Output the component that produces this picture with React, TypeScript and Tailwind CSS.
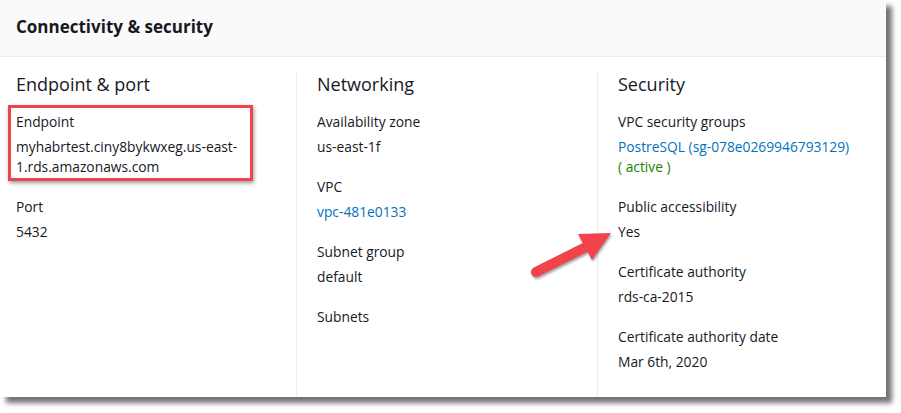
import React from "react"

const font = { fontFamily: '"Open Sans", "Noto Sans", sans-serif' }

type Item = { label: string; value: React.ReactNode }

function Field({ label, value }: Item) {
  return (
    <div className="mb-5">
      <div className="text-[13.8px] leading-5 text-[#16191f]">{label}</div>
      <div className="mt-[5px] text-[13.8px] leading-5 text-[#16191f]">{value}</div>
    </div>
  )
}

function Arrow() {
  return (
    <svg
      className="absolute left-[528px] top-[226px] drop-shadow-[1px_2px_1px_rgba(0,0,0,0.35)]"
      width="90"
      height="56"
      viewBox="0 0 90 56"
    >
      <line x1="8" y1="46" x2="60" y2="20" stroke="#f0434c" strokeWidth="10" strokeLinecap="round" />
      <polygon points="83,7 50,8 64,34" fill="#f0434c" />
    </svg>
  )
}

export default function App() {
  return (
    <div className="w-[901px] h-[413px] bg-white" style={font}>
      <div className="relative w-[886px] h-[397px] overflow-hidden bg-white shadow-[6px_6px_5px_rgba(0,0,0,0.55)]">
        <div className="h-[57px] bg-[#fafafa] border-b border-[#eaeded] px-4 flex items-center">
          <h2 className="text-[17px] font-bold text-[#16191f] leading-6 -mt-[3px]">Connectivity &amp; security</h2>
        </div>

        <div className="grid grid-cols-[296px_301px_1fr] pt-[15px]">
          <div className="pl-4">
            <h3 className="text-[18px] leading-6 text-[#16191f] mb-4">Endpoint &amp; port</h3>
            <div className="relative">
              <div className="absolute -left-2 -top-[7px] w-[245px] h-[76px] border-[3px] border-[#f0434c] shadow-[1px_2px_4px_rgba(0,0,0,0.4)]" />
              <Field
                label="Endpoint"
                value={
                  <>
                    myhabrtest.ciny8bykwxeg.us-east-
                    <br />
                    1.rds.amazonaws.com
                  </>
                }
              />
            </div>
            <Field label="Port" value="5432" />
          </div>

          <div className="border-l border-[#eaeded] pl-5 h-[340px]">
            <h3 className="text-[18px] leading-6 text-[#16191f] mb-4">Networking</h3>
            <Field label="Availability zone" value="us-east-1f" />
            <Field label="VPC" value={<span className="text-[#0073bb]">vpc-481e0133</span>} />
            <Field label="Subnet group" value="default" />
            <div className="text-[13.8px] leading-5 text-[#16191f]">Subnets</div>
            <div className="mt-[70px] text-[13.8px] leading-5 text-[#0073bb]">subnet-81bd7fe9</div>
          </div>

          <div className="border-l border-[#eaeded] pl-5">
            <h3 className="text-[18px] leading-6 text-[#16191f] mb-4">Security</h3>
            <Field
              label="VPC security groups"
              value={
                <>
                  <span className="text-[#0073bb]">PostreSQL (sg-078e0269946793129)</span>
                  <br />
                  <span className="text-[#1d8102]">( active )</span>
                </>
              }
            />
            <Field label="Public accessibility" value="Yes" />
            <Field label="Certificate authority" value="rds-ca-2015" />
            <Field label="Certificate authority date" value="Mar 6th, 2020" />
          </div>
        </div>

        <Arrow />
      </div>
    </div>
  )
}
